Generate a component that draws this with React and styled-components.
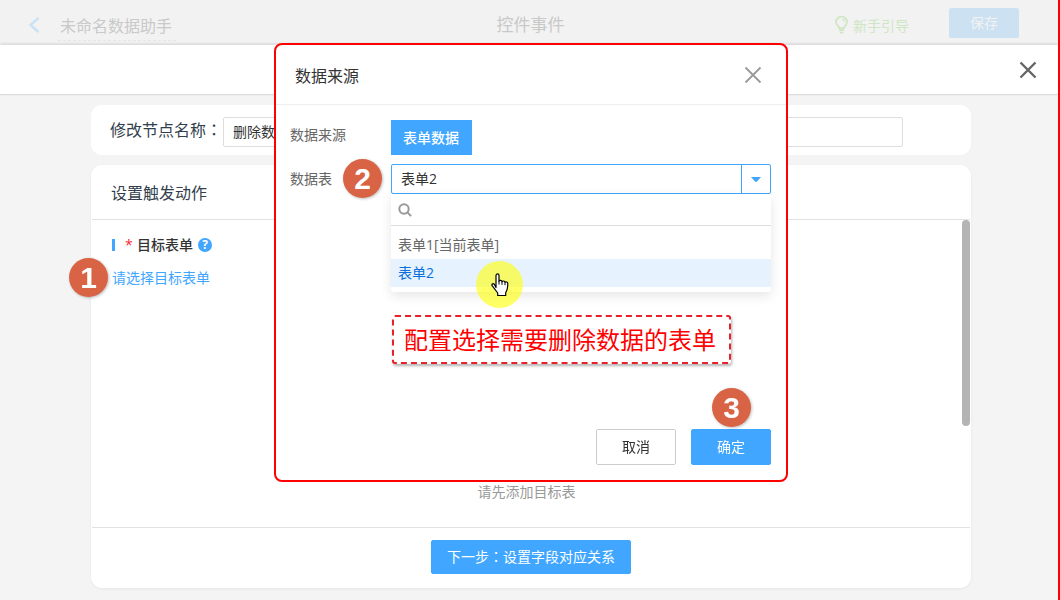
import styled, { createGlobalStyle } from "styled-components";

const GlobalStyle = createGlobalStyle`
  * {
    box-sizing: border-box;
  }

  body {
    margin: 0;
    background-color: #f4f4f4;
  }

  body, button, input, select {
    font-family: "Open Sans", "Noto Sans CJK SC", sans-serif;
    font-size: 14px;
  }

  button {
    cursor: pointer;
  }
`;

const StyledPage = styled.div`
  min-height: 100vh;
  display: flex;
  flex-direction: column;
  border-right: 2px solid #ff0000;
  overflow: hidden;
`;

const StyledHeader = styled.header`
  display: grid;
  grid-template-columns: 1fr auto 1fr;
  align-items: center;
  height: 45px;
  padding: 5px 39px 0 28px;
  background-color: #f2f2f2;
  color: #c9c9c9;

  .header-left,
  .header-right {
    display: flex;
    align-items: center;
  }

  .header-left {
    gap: 18px;
  }

  .header-right {
    justify-content: flex-end;
    gap: 40px;
  }

  .header-name {
    height: 36px;
    padding: 0 4px 0 2px;
    font-size: 16px;
    line-height: 38px;
  }

  .header-title {
    margin: 0;
    padding: 0 0 4px 14px;
    font-size: 17px;
    font-weight: 400;
  }
`;

const NameText = styled.span`
  display: block;
  height: 31px;
  padding: 0 4px 0 2px;
  font-size: 16px;
  line-height: 32px;
  border-bottom: 1px dashed #e4e4e4;
`;

const IconButton = styled.button`
  display: flex;
  align-items: center;
  justify-content: center;
  padding: 0;
  border: none;
  background: none;
  color: ${(props) => props.$color};
`;

const GuideLink = styled.a`
  display: flex;
  align-items: center;
  gap: 5px;
  color: #cfe6c5;
  text-decoration: none;
`;

const Button = styled.button`
  width: ${(props) => props.$width || "80px"};
  height: ${(props) => props.$height || "36px"};
  padding: 0 0 2px;
  border: 1px solid ${(props) => (props.$plain ? "#cccccc" : "#40a6ff")};
  border-radius: 2px;
  background-color: ${(props) => (props.$plain ? "#ffffff" : "#40a6ff")};
  color: ${(props) => (props.$plain ? "#333333" : "#ffffff")};

  &:disabled {
    margin-bottom: 4px;
    border-color: #cce1f2;
    background-color: #cce1f2;
    color: #f2f2f2;
  }
`;

const StyledTitleBar = styled.div`
  position: relative;
  display: flex;
  justify-content: flex-end;
  align-items: center;
  height: 50px;
  padding-right: 21px;
  background-color: #ffffff;
  border-bottom: 1px solid #dddddd;
  box-shadow: 0 -1px 3px rgba(0, 0, 0, 0.14);
`;

const StyledMain = styled.main`
  flex: 1;
  display: flex;
  flex-direction: column;
  gap: 10px;
  padding: 10px 87px 12px 91px;
`;

const Card = styled.section`
  display: flex;
  flex-direction: column;
  flex: ${(props) => (props.$grow ? 1 : "none")};
  border-radius: 11px;
  background-color: #ffffff;
  box-shadow: ${(props) =>
    props.$grow ? "0 1px 3px rgba(0, 0, 0, 0.06)" : "none"};
`;

const NameRow = styled.div`
  display: flex;
  align-items: center;
  gap: 1px;
  height: 50px;
  padding: 0 68px 0 19px;

  label {
    padding-bottom: 2px;
    font-size: 16px;
    color: #333f4d;
    white-space: nowrap;
  }

  input {
    flex: 1;
    min-width: 0;
    height: 30px;
    padding: 0 9px 2px;
    border: 1px solid #dddddd;
    border-radius: 2px;
    margin-top: 4px;
    color: #333333;
  }
`;

// full-width colon centred in its cell
const Colon = styled.span`
  font-family: "Noto Sans CJK TC", sans-serif;
`;

const StyledAction = styled.div`
  flex: 1;
  display: flex;
  flex-direction: column;

  .action-title {
    height: 55px;
    margin: 0 1px;
    padding-left: 19px;
    border-bottom: 1px solid #e2e2e2;
    font-size: 16px;
    font-weight: 400;
    line-height: 56px;
    color: #333f4d;
  }

  .action-body {
    position: relative;
    flex: 1;
    display: flex;
    flex-direction: column;
    align-items: flex-start;
    margin: 0 1px;
    padding: 15px 9px 25px 20px;
  }

  .action-label {
    display: flex;
    align-items: center;
    height: 20px;
    font-weight: 500;
    line-height: 18px;
    color: #333333;
  }

  .action-mark {
    width: 3px;
    height: 12px;
    margin-right: 10px;
    background-color: #40a6ff;
  }

  .action-required {
    width: 12px;
    color: #ff2a2a;
    line-height: 20px;
  }

  .action-empty {
    align-self: center;
    margin: auto 0 0;
    padding-right: 20px;
    line-height: 20px;
    color: #999999;
  }

  .action-footer {
    display: flex;
    justify-content: center;
    margin: 0 1px;
    padding: 12px 0 14px;
    border-top: 1px solid #e2e2e2;
  }
`;

const HelpButton = styled.button`
  width: 14px;
  height: 14px;
  margin-left: 5px;
  padding: 0;
  border: none;
  border-radius: 50%;
  background-color: #40a6ff;
  color: #ffffff;
  font-size: 12px;
  font-weight: 700;
  line-height: 14px;
`;

const TargetLink = styled.a`
  position: relative;
  margin-top: 12px;
  line-height: 22px;
  color: #40a6ff;
  text-decoration: none;
`;

const ScrollThumb = styled.div`
  position: absolute;
  top: 0;
  right: 0;
  width: 8px;
  height: 67%;
  border-radius: 4px;
  background-color: #b4b4b4;
`;

const StepBadge = styled.span`
  position: absolute;
  left: ${(props) => props.$left};
  top: ${(props) => props.$top};
  z-index: 1;
  width: 39px;
  height: 39px;
  border-radius: 50%;
  background-color: #d86345;
  box-shadow: 1px 1px 3px rgba(0, 0, 0, 0.25);
  color: #ffffff;
  font-family: "Liberation Sans", sans-serif;
  font-size: 30px;
  font-weight: 700;
  line-height: 39px;
  text-align: center;
`;

const Overlay = styled.div`
  position: fixed;
  inset: 0;
  display: flex;
  justify-content: center;
  align-items: flex-start;
  padding: 43px 0 0 2px;
`;

const StyledModal = styled.div`
  width: 514px;
  border: 2px solid #ff0000;
  border-radius: 8px;
  background-color: #ffffff;

  .modal-header {
    display: flex;
    justify-content: space-between;
    align-items: center;
    height: 60px;
    padding: 0 24px 0 19px;
    border-bottom: 1px solid #eeeeee;
  }

  .modal-header h2 {
    margin: 0;
    font-size: 16px;
    font-weight: 400;
    color: #333333;
  }

  .modal-body {
    display: flex;
    flex-direction: column;
    gap: 9px;
    padding: 15px 15px 0 14px;
  }

  .modal-footer {
    position: relative;
    display: flex;
    justify-content: flex-end;
    gap: 15px;
    padding: 65px 15px 15px;
  }
`;

const FormRow = styled.div`
  position: relative;
  display: grid;
  grid-template-columns: 101px 1fr;
  align-items: start;
  line-height: 29px;
  color: #666666;
`;

const SourceButton = styled.button`
  justify-self: start;
  height: 35px;
  padding: 0 13px 2px 12px;
  border: none;
  background-color: #40a6ff;
  color: #ffffff;
  font-weight: 500;
`;

const StyledSelect = styled.div`
  position: relative;
  display: flex;
  height: 30px;
  border: 1px solid #40a6ff;
  border-radius: 2px;

  select {
    flex: 1;
    appearance: none;
    padding: 0 9px 2px;
    border: none;
    outline: none;
    background: none;
    color: #333333;
  }

  .select-toggle {
    width: 29px;
    border-left: 1px solid #40a6ff;
  }
`;

const Dropdown = styled.div`
  position: absolute;
  top: 29px;
  left: -1px;
  right: -1px;
  padding-bottom: 5px;
  border-radius: 0 0 3px 3px;
  background-color: #ffffff;
  box-shadow: 0 4px 12px rgba(0, 0, 0, 0.1);

  .dropdown-search {
    display: flex;
    align-items: center;
    gap: 6px;
    height: 32px;
    padding: 0 7px;
    border-bottom: 1px solid #dddddd;
    color: #999999;
  }

  .dropdown-search input {
    flex: 1;
    min-width: 0;
    border: none;
    outline: none;
    background: none;
  }

  ul {
    margin: 0;
    padding: 5px 0 0;
    list-style: none;
  }
`;

const Option = styled.li`
  height: 28px;
  padding: 0 7px;
  line-height: 28px;
  background-color: ${(props) => (props.$active ? "#e6f3ff" : "transparent")};
  color: ${(props) => (props.$active ? "#0b6fdc" : "#666666")};
`;

const Pointer = styled.div`
  position: absolute;
  top: 67px;
  left: 85px;
  width: 47px;
  height: 47px;
  display: flex;
  align-items: center;
  justify-content: center;
  border-radius: 50%;
  background-color: rgba(255, 255, 0, 0.6);
`;

const Note = styled.p`
  align-self: flex-start;
  margin: 112px 0 0 102px;
  padding: 0 13px 0 10px;
  border: 2px dashed #e8202a;
  border-radius: 3px;
  background-color: #ffffff;
  box-shadow: 1px 2px 3px rgba(0, 0, 0, 0.3);
  color: #ff0000;
  font-size: 24px;
  line-height: 45px;
  white-space: nowrap;
`;

function CloseIcon({ size, width }) {
  return (
    <svg width={size} height={size} viewBox="0 0 18 18" aria-hidden="true">
      <path
        d="M1.5 1.5l15 15M16.5 1.5l-15 15"
        stroke="currentColor"
        strokeWidth={width}
        fill="none"
      />
    </svg>
  );
}

function BulbIcon() {
  return (
    <svg width="13" height="18" viewBox="0 0 13 18" aria-hidden="true">
      <g fill="none" stroke="currentColor" strokeWidth="1.8">
        <path d="M4.2 12.2c0-2-3.2-3-3.2-6.2a5.4 5.2 0 0 1 11 0c0 3.2-3.2 4.2-3.2 6.2z" />
        <path d="M7 3.3c1.4.2 2.4 1.1 2.6 2.5" strokeWidth="1.3" />
        <path d="M4 14.2h5M4.8 16.6h3.4" />
      </g>
    </svg>
  );
}

function HandIcon() {
  return (
    <svg width="18" height="24" viewBox="0 0 18 24" aria-hidden="true">
      <path
        d="M5 14.5V2.500C5 .4 8 .4 8 2.500V8.200c.3-1.300 2.800-1.200 3 .5.500-1.100 2.700-.9 3 .6.800-.9 2.800-.4 2.800 1.200 0 4-.3 6.500-2.100 9V22.500H6.700V20C5 17.800 3.300 15.500 1.300 12.900c-1-1.500.6-2.900 2-1.700z"
        fill="#ffffff"
        stroke="#000000"
        strokeWidth="1.2"
        strokeLinejoin="round"
      />
      <path d="M8 8v3.5M11 8.8v3M14 9.5v2.7" stroke="#000000" fill="none" />
    </svg>
  );
}

function SourceModal() {
  return (
    <Overlay>
      <StyledModal role="dialog" aria-labelledby="modal-title">
        <div className="modal-header">
          <h2 id="modal-title">数据来源</h2>
          <IconButton $color="#999999" aria-label="关闭">
            <CloseIcon size={18} width={1.8} />
          </IconButton>
        </div>
        <div className="modal-body">
          <FormRow>
            <span>数据来源</span>
            <SourceButton>表单数据</SourceButton>
          </FormRow>
          <FormRow>
            <label htmlFor="table">数据表</label>
            <StepBadge $left="53px" $top="-5px">
              2
            </StepBadge>
            <StyledSelect>
              <select id="table" defaultValue="2">
                <option value="1">表单1[当前表单]</option>
                <option value="2">表单2</option>
              </select>
              <IconButton
                className="select-toggle"
                $color="#40a6ff"
                aria-label="展开"
              >
                <svg width="10" height="5" viewBox="0 0 10 5" aria-hidden="true">
                  <path d="M0 0h10L6 4.500Q5 5.300 4 4.500z" fill="currentColor" />
                </svg>
              </IconButton>
              <Dropdown>
                <div className="dropdown-search">
                  <svg width="14" height="14" viewBox="0 0 14 14" aria-hidden="true">
                    <g fill="none" stroke="currentColor" strokeWidth="2">
                      <circle cx="6" cy="6" r="4.7" />
                      <path d="M9.4 9.4l3.7 3.7" />
                    </g>
                  </svg>
                  <input type="text" aria-label="搜索" />
                </div>
                <ul role="listbox">
                  <Option role="option">表单1[当前表单]</Option>
                  <Option role="option" aria-selected="true" $active>
                    表单2
                  </Option>
                </ul>
                <Pointer>
                  <HandIcon />
                </Pointer>
              </Dropdown>
            </StyledSelect>
          </FormRow>
          <Note>配置选择需要删除数据的表单</Note>
        </div>
        <div className="modal-footer">
          <Button $plain>取消</Button>
          <Button>确定</Button>
          <StepBadge $left="436px" $top="24px">
            3
          </StepBadge>
        </div>
      </StyledModal>
    </Overlay>
  );
}

function App() {
  return (
    <>
      <GlobalStyle />
      <StyledPage>
        <StyledHeader>
          <div className="header-left">
            <IconButton $color="#c9e2f7" aria-label="返回">
              <svg width="12" height="16" viewBox="0 0 12 16" aria-hidden="true">
                <path
                  d="M10.5 1L2.5 8l8 7"
                  fill="none"
                  stroke="currentColor"
                  strokeWidth="2.4"
                />
              </svg>
            </IconButton>
            <NameText>未命名数据助手</NameText>
          </div>
          <h1 className="header-title">控件事件</h1>
          <div className="header-right">
            <GuideLink href="#guide">
              <BulbIcon />
              新手引导
            </GuideLink>
            <Button $width="70px" $height="30px" disabled>
              保存
            </Button>
          </div>
        </StyledHeader>
        <StyledTitleBar>
          <IconButton $color="#666666" aria-label="关闭">
            <CloseIcon size={18} width={2.4} />
          </IconButton>
        </StyledTitleBar>
        <StyledMain>
          <Card>
            <NameRow>
              <label htmlFor="node-name">
                修改节点名称<Colon>：</Colon>
              </label>
              <input id="node-name" type="text" defaultValue="删除数据" />
            </NameRow>
          </Card>
          <Card $grow>
            <StyledAction>
              <h2 className="action-title">设置触发动作</h2>
              <div className="action-body">
                <div className="action-label">
                  <span className="action-mark" />
                  <span className="action-required">*</span>
                  目标表单
                  <HelpButton aria-label="帮助">?</HelpButton>
                </div>
                <TargetLink href="#target">
                  请选择目标表单
                  <StepBadge $left="-43px" $top="-9px">
                    1
                  </StepBadge>
                </TargetLink>
                <p className="action-empty">请先添加目标表</p>
                <ScrollThumb />
              </div>
              <div className="action-footer">
                <Button $width="200px" $height="34px">
                  下一步<Colon>：</Colon>设置字段对应关系
                </Button>
              </div>
            </StyledAction>
          </Card>
        </StyledMain>
      </StyledPage>
      <SourceModal />
    </>
  );
}

export default App;
